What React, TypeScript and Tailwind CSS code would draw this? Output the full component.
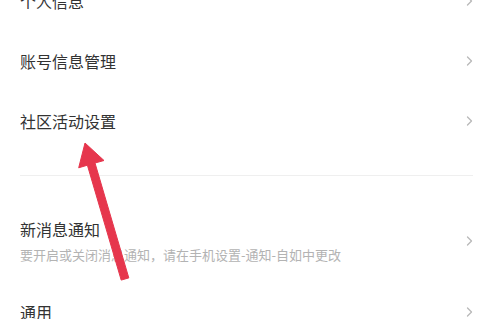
const Chevron = () => (
  <svg width="7" height="10" viewBox="0 0 7 10" fill="none" className="shrink-0">
    <path d="M1.5 1 L5.5 5 L1.5 9" stroke="#b8b8b8" strokeWidth="1.3" strokeLinecap="round" strokeLinejoin="round" />
  </svg>
);

const Row = ({ title }: { title: string }) => (
  <div className="h-[60px] flex items-center justify-between pl-5 pr-[6px]">
    <span className="text-[16px] leading-[22px] text-[#333333]">{title}</span>
    <Chevron />
  </div>
);

export default function App() {
  return (
    <div className="relative w-[479px] h-[319px] overflow-hidden bg-white font-['Noto_Sans_CJK_SC',sans-serif]">
      <div className="-mt-[29px]">
        <Row title="个人信息" />
        <Row title="账号信息管理" />
        <Row title="社区活动设置" />

        {/* group gap + divider */}
        <div className="h-[24px]" />
        <div className="h-px bg-[#efefef] ml-5 mr-[6px]" />

        <div className="h-[106px] pt-[24px] flex items-center justify-between pl-5 pr-[6px]">
          <div className="flex flex-col">
            <span className="text-[16px] leading-[22px] text-[#333333]">新消息通知</span>
            <span className="mt-[6px] text-[13px] leading-[18px] text-[#b3b3b3]">
              要开启或关闭消息通知，请在手机设置-通知-自如中更改
            </span>
          </div>
          <Chevron />
        </div>

        <Row title="通用" />
      </div>

      {/* red annotation arrow */}
      <svg className="absolute inset-0 pointer-events-none" width="479" height="319" viewBox="0 0 479 319">
        <polygon
          points="85,143 104,160.5 95,163 128.8,277.9 121.2,280.1 87.4,165.2 78.7,167.8"
          fill="#e6364d"
          stroke="#e6364d"
          strokeWidth="1"
          strokeLinejoin="round"
        />
      </svg>
    </div>
  );
}
